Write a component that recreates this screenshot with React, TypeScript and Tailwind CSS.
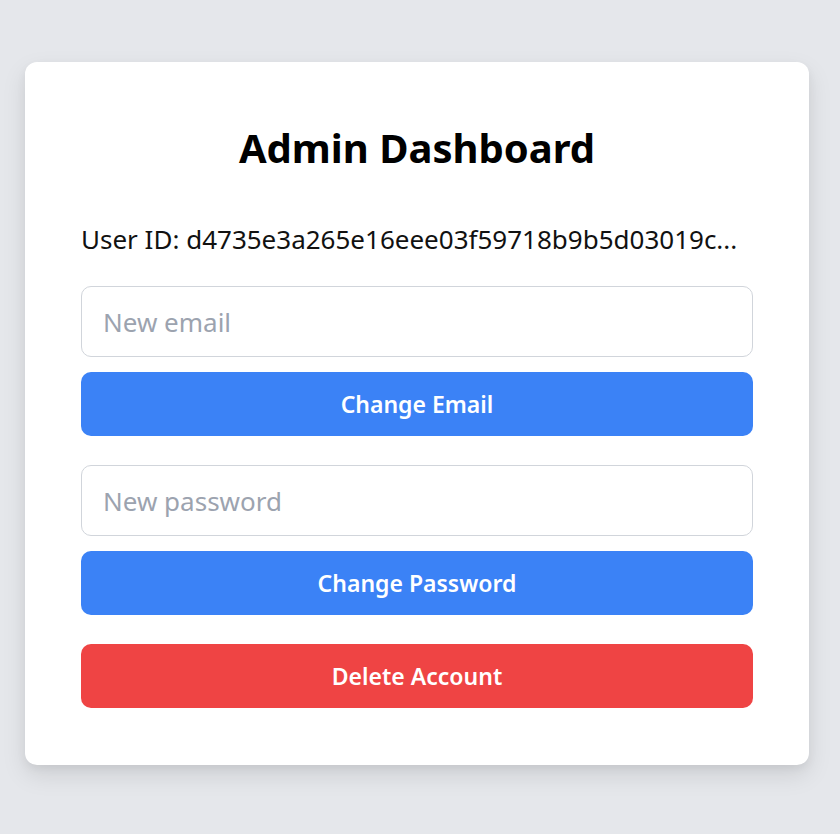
export default function App() {
  return (
    <div
      className="min-h-screen bg-[#e5e7eb] pl-[25px] pt-[62px]"
      style={{ fontFamily: '"Noto Sans", "Open Sans", sans-serif' }}
    >
      <div className="w-[784px] rounded-xl bg-white px-[56px] pt-[56px] pb-[57px] shadow-[0_10px_25px_rgba(0,0,0,0.1),0_4px_10px_rgba(0,0,0,0.05)]">
        <h1 className="text-center text-[40px] font-bold leading-[60px] text-black">Admin Dashboard</h1>
        <p className="mt-[43px] text-[26px] leading-[36px] text-[#111]">
          User ID: d4735e3a265e16eee03f59718b9b5d03019c...
        </p>
        <div className="mt-[29px] flex flex-col">
          <input
            type="email"
            placeholder="New email"
            className="h-[71px] w-full rounded-[10px] border border-[#d1d5db] px-[21px] text-[26px] text-black outline-none placeholder:text-[#9ca3af]"
          />
          <button className="mt-[15px] h-[64px] w-full rounded-[10px] bg-[#3b82f6] text-[23px] font-semibold text-white">
            Change Email
          </button>
          <input
            type="password"
            placeholder="New password"
            className="mt-[29px] h-[71px] w-full rounded-[10px] border border-[#d1d5db] px-[21px] text-[26px] text-black outline-none placeholder:text-[#9ca3af]"
          />
          <button className="mt-[15px] h-[64px] w-full rounded-[10px] bg-[#3b82f6] text-[23px] font-semibold text-white">
            Change Password
          </button>
          <button className="mt-[29px] h-[64px] w-full rounded-[10px] bg-[#ef4444] text-[23px] font-semibold text-white">
            Delete Account
          </button>
        </div>
      </div>
    </div>
  )
}
